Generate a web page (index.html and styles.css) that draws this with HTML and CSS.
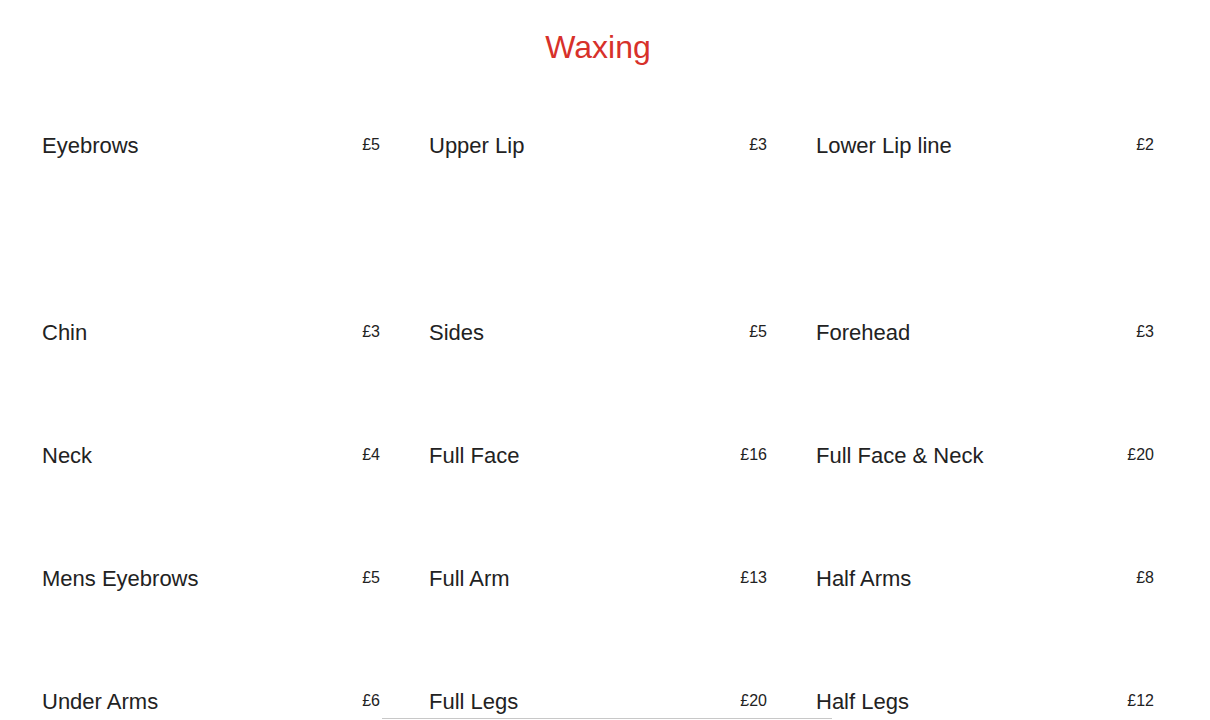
FILE: index.html
```html
<!DOCTYPE html>
<html lang="en">
<head>
<meta charset="utf-8">
<title>Waxing</title>
<link rel="stylesheet" href="styles.css">
</head>
<body>
<main class="menu">
  <h1 class="title">Waxing</h1>
  <div class="grid">
    <div class="item"><span class="name">Eyebrows</span><span class="price">£5</span></div>
    <div class="item"><span class="name">Upper Lip</span><span class="price">£3</span></div>
    <div class="item"><span class="name">Lower Lip line</span><span class="price">£2</span></div>
    <div class="item"><span class="name">Chin</span><span class="price">£3</span></div>
    <div class="item"><span class="name">Sides</span><span class="price">£5</span></div>
    <div class="item"><span class="name">Forehead</span><span class="price">£3</span></div>
    <div class="item"><span class="name">Neck</span><span class="price">£4</span></div>
    <div class="item"><span class="name">Full Face</span><span class="price">£16</span></div>
    <div class="item"><span class="name">Full Face &amp; Neck</span><span class="price">£20</span></div>
    <div class="item"><span class="name">Mens Eyebrows</span><span class="price">£5</span></div>
    <div class="item"><span class="name">Full Arm</span><span class="price">£13</span></div>
    <div class="item"><span class="name">Half Arms</span><span class="price">£8</span></div>
    <div class="item"><span class="name">Under Arms</span><span class="price">£6</span></div>
    <div class="item"><span class="name">Full Legs</span><span class="price">£20</span></div>
    <div class="item"><span class="name">Half Legs</span><span class="price">£12</span></div>
  </div>
</main>
<hr class="divider">
</body>
</html>
```
FILE: styles.css
```css
html, body {
  margin: 0;
  padding: 0;
  background: #ffffff;
}
body {
  font-family: "Liberation Sans", Arial, sans-serif;
  color: #222222;
}
.menu {
  width: 1112px;
  margin-left: 42px;
  padding-top: 29px;
}
.title {
  margin: 0;
  font-size: 32px;
  font-weight: normal;
  line-height: 37px;
  text-align: center;
  color: #d7312a;
}
.grid {
  margin-top: 67px;
  display: grid;
  grid-template-columns: repeat(3, 338px);
  grid-template-rows: 187px 123px 123px 123px 29px;
  column-gap: 49px;
}
.item {
  display: flex;
  justify-content: space-between;
  align-items: flex-start;
}
.name {
  font-size: 22px;
  line-height: 25px;
}
.price {
  font-size: 16px;
  line-height: 18px;
  padding-top: 3px;
}
.divider {
  margin: 0 0 0 382px;
  width: 450px;
  height: 0;
  border: 0;
  border-top: 1px solid #c8c8c8;
}
```
